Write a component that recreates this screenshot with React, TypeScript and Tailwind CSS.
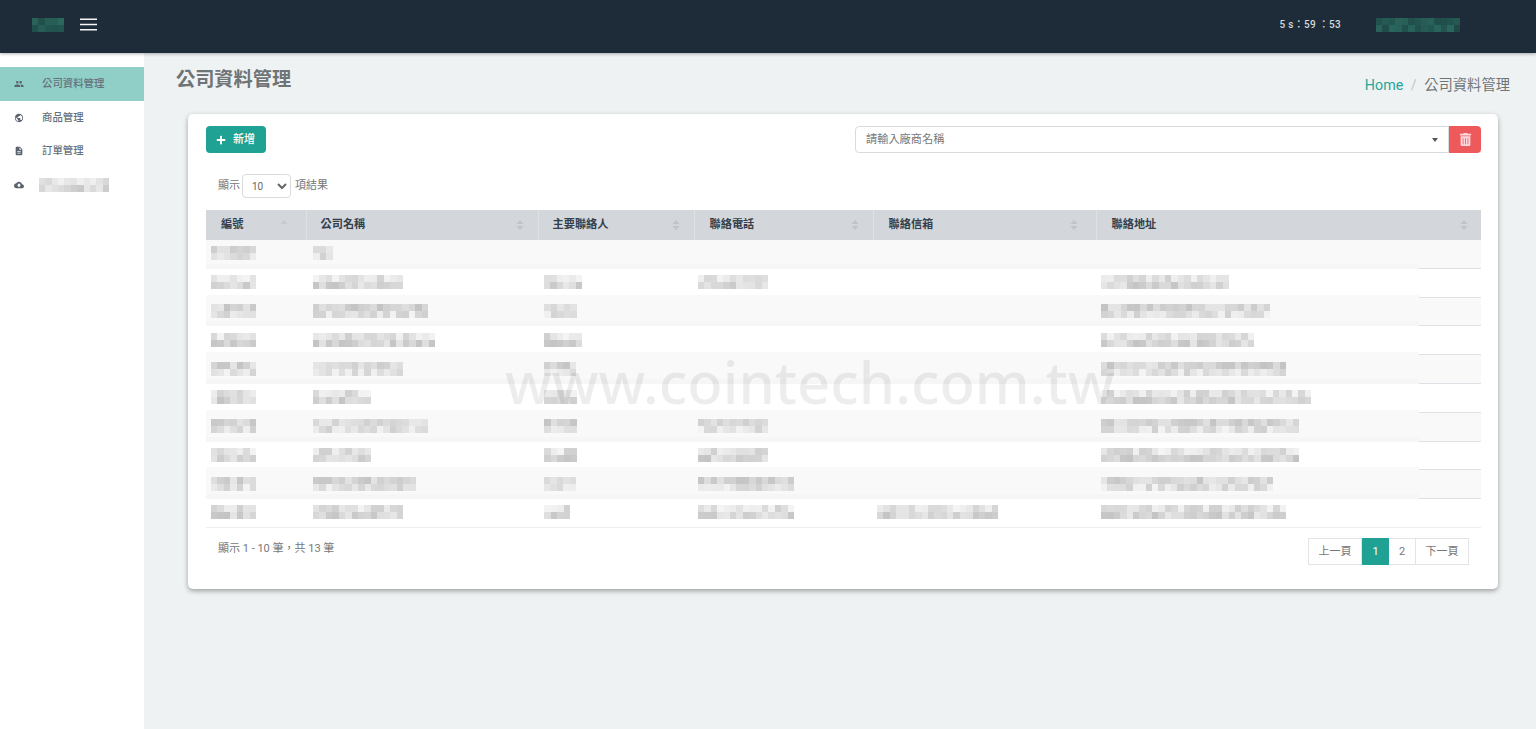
import { FaPlus, FaTrashAlt } from 'react-icons/fa'
import { MdCloudUpload, MdDescription, MdPeople, MdPublic } from 'react-icons/md'

const cjk = 'font-["Roboto","Noto_Sans_CJK_TC",sans-serif]'

// blurred-out cell contents, drawn as small grey squares
function Mosaic({ width, seed, tint = false }: { width: number; seed: number; tint?: boolean }) {
  const cols = Math.max(1, Math.round(width / 6.4))
  let n = seed * 7919 + 13
  const next = () => {
    n = (n * 1103515245 + 12345) % 2147483648
    return (n >> 8) % 100
  }
  const darkRow = seed % 2
  const cells: string[] = []
  for (let i = 0; i < cols * 2; i++) {
    const v = next()
    const row = i < cols ? 0 : 1
    if (tint) {
      cells.push(`rgb(${30 + v / 8},${72 + v / 3},${70 + v / 4})`)
    } else {
      const g = (row === darkRow ? 196 : 208) + Math.round(v * 0.36)
      cells.push(`rgb(${g},${g},${g})`)
    }
  }
  return (
    <div
      className="grid blur-[0.5px]"
      style={{ width, gridTemplateColumns: `repeat(${cols}, 1fr)`, gridAutoRows: '7px' }}
    >
      {cells.map((c, i) => (
        <div key={i} style={{ background: c }} />
      ))}
    </div>
  )
}

function SortIcon({ active = false }: { active?: boolean }) {
  return (
    <svg width="8" height="12" viewBox="0 0 8 12" className={active ? 'text-[#c6cacf]' : 'text-[#bfc4c9]'}>
      <path d="M4 1 7.5 5h-7z" fill="currentColor" />
      {!active && <path d="M4 11 .5 7h7z" fill="currentColor" />}
    </svg>
  )
}

const menu = [
  { icon: MdPeople, label: '公司資料管理', active: true },
  { icon: MdPublic, label: '商品管理' },
  { icon: MdDescription, label: '訂單管理' },
  { icon: MdCloudUpload, label: '' },
]

const columns = [
  { title: '編號', width: 'w-[100px]', pad: 'pl-[15px]', pr: 'pr-[18px]', active: true },
  { title: '公司名稱', width: 'w-[232px]', pad: 'pl-[14px]', pr: 'pr-[14px]' },
  { title: '主要聯絡人', width: 'w-[156px]', pad: 'pl-[14px]', pr: 'pr-[14px]' },
  { title: '聯絡電話', width: 'w-[179px]', pad: 'pl-[15px]', pr: 'pr-[14px]' },
  { title: '聯絡信箱', width: 'w-[223px]', pad: 'pl-[15px]', pr: 'pr-[18px]' },
  { title: '聯絡地址', width: 'w-[385px]', pad: 'pl-[15px]', pr: 'pr-[13px]' },
]

// widths of name, contact, phone, email, address
const rows = [
  [20, 0, 0, 0, 0],
  [90, 38, 70, 0, 128],
  [115, 33, 0, 0, 169],
  [122, 38, 0, 0, 153],
  [90, 32, 0, 0, 185],
  [58, 33, 0, 0, 210],
  [115, 33, 70, 0, 198],
  [58, 33, 70, 0, 198],
  [103, 32, 96, 0, 172],
  [90, 26, 96, 121, 185],
]

export default function App() {
  return (
    <div className={`min-h-[729px] bg-[#eff2f3] ${cjk}`}>
      <header className="relative z-10 flex h-[53px] items-center justify-between bg-[#1e2b38] pb-[4px] shadow-[0_1px_3px_rgba(0,0,0,0.3)]">
        <div className="flex items-center pl-[32px]">
          <Mosaic width={32} seed={3} tint />
          <svg width="17" height="13" viewBox="0 0 17 13" className="ml-[16px]">
            <path d="M0 1.25h17M0 6.5h17M0 11.75h17" stroke="#f4f6f7" strokeWidth="1.5" />
          </svg>
        </div>
        <div className="flex items-center pr-[76px]">
          <span className="text-[10px] font-medium tracking-[0.3px] text-[#d5d9dc]">5 s：59 ：53</span>
          <div className="ml-[35px]">
            <Mosaic width={84} seed={8} tint />
          </div>
        </div>
      </header>

      <div className="flex">
        <aside className="min-h-[676px] w-[144px] shrink-0 bg-white pt-[14px]">
          {menu.map((item, i) => (
            <div
              key={i}
              className={`flex h-[33.7px] items-center pl-[14px] text-[10.4px] font-medium text-[#66707c] ${item.active ? 'bg-[#8fcfc8]' : ''}`}
            >
              <item.icon size={10} className="shrink-0 text-[#59636e]" />
              {item.label ? (
                <span className="ml-[18px]">{item.label}</span>
              ) : (
                <div className="ml-[15px]">
                  <Mosaic width={70} seed={21} />
                </div>
              )}
            </div>
          ))}
        </aside>

        <main className="flex-1">
          <div className="flex h-[61px] items-start justify-between pl-[32px] pr-[26px]">
            <h1 className="pt-[13px] text-[19.2px] font-bold text-[#6f7477]">公司資料管理</h1>
            <div className="flex pt-[22px] text-[14.3px] text-[#6f7477]">
              <span className="text-[#26a69a]">Home</span>
              <span className="mx-[7.5px] text-[#c2c6c9]">/</span>
              <span>公司資料管理</span>
            </div>
          </div>

          <section className="ml-[44px] mr-[38px] h-[475px] rounded-[5px] bg-white pl-[18px] pr-[17px] pt-[12px] shadow-[0_2px_5px_rgba(0,0,0,0.35)]">
            <div className="flex h-[27px] items-center justify-between">
              <button className="flex h-[27px] w-[60px] items-center justify-center gap-[7px] rounded-[4px] bg-[#1fa193] pr-[1px] pt-[1px] text-[11px] font-medium text-white">
                <FaPlus size={10} />
                新增
              </button>
              <div className="flex">
                <div className="flex h-[27px] w-[594px] items-center justify-between rounded-l-[4px] border border-[#d9dcde] pl-[10px] pr-[10px] pt-[1px] text-[11.2px] text-[#777]">
                  請輸入廠商名稱
                  <span className="h-0 w-0 border-x-[3.5px] border-t-[4px] border-x-transparent border-t-[#555]" />
                </div>
                <button className="flex h-[27px] w-[32px] items-center justify-center rounded-r-[4px] bg-[#ee5a5c] text-white">
                  <FaTrashAlt size={13} className="text-[#ffd9de]" />
                </button>
              </div>
            </div>

            <div className="ml-[12px] mt-[21px] flex h-[24px] items-center text-[11px] text-[#777]">
              顯示
              <select
                defaultValue="10"
                className="ml-[2px] mr-[4px] h-[24px] w-[49px] rounded-[4px] border border-[#d9dcde] pl-[5px] text-[10px] text-[#666]"
              >
                <option value="10">10</option>
                <option value="25">25</option>
              </select>
              項結果
            </div>

            <table className="mt-[12px] w-[1275px] table-fixed border-collapse border-b border-[#eceeef]">
              <thead>
                <tr className="h-[30px] bg-[#d3d7dc] text-left">
                  {columns.map((c, i) => (
                    <th
                      key={c.title}
                      className={`${c.width} ${c.pad} ${i > 0 ? 'border-l border-[#dfe2e5]' : ''} p-0 text-[11.2px] font-bold text-[#343f4b]`}
                    >
                      <div className={`flex items-center justify-between ${c.pr}`}>
                        {c.title}
                        <SortIcon active={c.active} />
                      </div>
                    </th>
                  ))}
                </tr>
              </thead>
              <tbody>
                {rows.map((r, i) => (
                  <tr key={i} className={`relative h-[28.8px] ${i % 2 === 0 ? 'bg-[#f9f9f9]' : 'bg-white'}`}>
                    <td className="relative p-0 pb-[2px] pl-[5px]">
                      <Mosaic width={45} seed={i + 100} />
                    </td>
                    <td className="p-0 pb-[2px] pl-[7px]">{r[0] > 0 && <Mosaic width={r[0]} seed={i + 200} />}</td>
                    <td className="p-0 pb-[2px] pl-[6px]">{r[1] > 0 && <Mosaic width={r[1]} seed={i + 300} />}</td>
                    <td className="p-0 pb-[2px] pl-[4px]">{r[2] > 0 && <Mosaic width={r[2]} seed={i + 400} />}</td>
                    <td className="p-0 pb-[2px] pl-[4px]">{r[3] > 0 && <Mosaic width={r[3]} seed={i + 500} />}</td>
                    <td className="p-0 pb-[2px] pl-[5px]">
                      {r[4] > 0 && <Mosaic width={r[4]} seed={i + 600} />}
                      {i < 9 && <div className="absolute bottom-0 right-0 h-px w-[62px] bg-[#dee2e6]" />}
                      {i % 2 === 0 && i < 9 && <div className="absolute bottom-0 left-0 right-[62px] h-[5px] bg-[#f6f6f6]" />}
                      {i % 2 === 0 && i > 0 && <div className="absolute -top-[3px] left-0 right-[62px] h-[3px] bg-[#f9f9f9]" />}
                    </td>
                  </tr>
                ))}
              </tbody>
            </table>

            <div className="flex items-start justify-between pl-[12px] pr-[12px] pt-[10px]">
              <span className="pt-[3px] text-[11px] text-[#777]">顯示 1 - 10 筆，共 13 筆</span>
              <div className="flex h-[27px] text-[11px] text-[#777]">
                <span className="flex w-[54px] items-center justify-center border border-[#e2e4e6]">上一頁</span>
                <span className="flex w-[27px] items-center justify-center bg-[#1fa193] text-white">1</span>
                <span className="flex w-[26px] items-center justify-center border-y border-[#e2e4e6]">2</span>
                <span className="flex w-[54px] items-center justify-center border border-[#e2e4e6]">下一頁</span>
              </div>
            </div>
          </section>
        </main>
      </div>

      {/* watermark over the table */}
      <div className='pointer-events-none absolute left-[505px] top-[338px] whitespace-nowrap font-["Noto_Sans",sans-serif] text-[58px] font-medium text-[rgba(0,0,0,0.07)]'>
        www.cointech.com.tw
      </div>
    </div>
  )
}
